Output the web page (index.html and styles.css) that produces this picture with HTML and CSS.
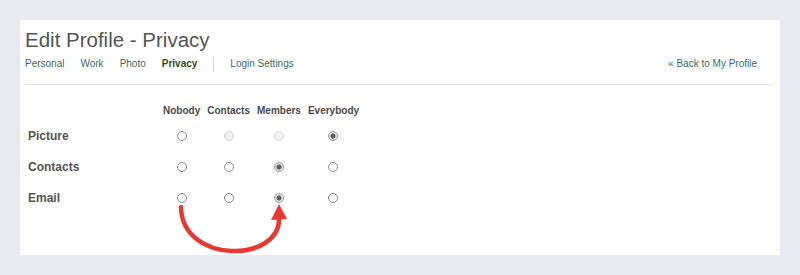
FILE: index.html
```html
<!DOCTYPE html>
<html lang="en">

    <head>
        <meta charset="UTF-8">
        <title>Edit Profile - Privacy</title>
        <link rel="stylesheet" href="styles.css">
    </head>

    <body>
        <div class="panel">
            <h1 class="title">Edit Profile - Privacy</h1>

            <nav class="tabs">
                <a href="#">Personal</a>
                <a href="#">Work</a>
                <a href="#">Photo</a>
                <a href="#" class="active">Privacy</a>
                <span class="sep"></span>
                <a href="#">Login Settings</a>
                <a href="#" class="back">&laquo; Back to My Profile</a>
            </nav>

            <div class="privacy">
                <div></div>
                <div class="head">Nobody</div>
                <div class="head">Contacts</div>
                <div class="head">Members</div>
                <div class="head">Everybody</div>

                <div class="label">Picture</div>
                <div class="cell"><input type="radio" name="picture"></div>
                <div class="cell"><input type="radio" name="picture" disabled></div>
                <div class="cell"><input type="radio" name="picture" disabled></div>
                <div class="cell"><input type="radio" name="picture" checked></div>

                <div class="label">Contacts</div>
                <div class="cell"><input type="radio" name="contacts"></div>
                <div class="cell"><input type="radio" name="contacts"></div>
                <div class="cell"><input type="radio" name="contacts" checked></div>
                <div class="cell"><input type="radio" name="contacts"></div>

                <div class="label">Email</div>
                <div class="cell"><input type="radio" name="email"></div>
                <div class="cell"><input type="radio" name="email"></div>
                <div class="cell"><input type="radio" name="email" checked></div>
                <div class="cell"><input type="radio" name="email"></div>
            </div>

            <svg class="arrow" width="760" height="235" viewBox="0 0 760 235">
                <path d="M161 187 C 162 245, 262 243, 259 197" fill="none" stroke="#e8392e" stroke-width="4.5" stroke-linecap="round" />
                <polygon points="259,184 251,200 267,199" fill="#e8392e" />
            </svg>
        </div>
    </body>

</html>
```

FILE: styles.css
```css
* {
    margin: 0;
    padding: 0;
    box-sizing: border-box;
}

body {
    background-color: #e9eaef;
    padding: 20px;
    font-family: "Liberation Sans", Arial, sans-serif;
}

.panel {
    position: relative;
    width: 760px;
    height: 235px;
    background: #fff;
    padding: 8px 7px 0 5px;
}

.title {
    font-size: 20.5px;
    line-height: 24px;
    font-weight: normal;
    color: #555;
}

.tabs {
    display: flex;
    align-items: center;
    gap: 16px;
    margin-top: 4px;
    padding-bottom: 12px;
    border-bottom: 1px solid #e2e2e2;
    font-size: 10px;
    line-height: 16px;
    height: 16px;
    box-sizing: content-box;
}

.tabs a {
    color: #3b6b5d;
    text-decoration: none;
}

.tabs a.active {
    color: #2e4a1d;
    font-weight: bold;
}

.tabs .sep {
    width: 1px;
    height: 15px;
    background: #dedede;
}

.tabs a.back {
    margin-left: auto;
    margin-right: 16px;
}

.privacy {
    display: grid;
    grid-template-columns: 128px repeat(4, auto);
    grid-template-rows: 20px repeat(3, 31px);
    column-gap: 7px;
    justify-content: start;
    margin: 15px 0 0 3px;
    color: #555;
}

.head {
    font-size: 10px;
    font-weight: bold;
    color: #4a4a4a;
    display: flex;
    align-items: center;
    justify-content: center;
}

.label {
    font-size: 12px;
    font-weight: bold;
    display: flex;
    align-items: center;
}

.cell {
    display: flex;
    align-items: center;
    justify-content: center;
}

.cell input {
    appearance: none;
    -webkit-appearance: none;
    width: 10px;
    height: 10px;
    border: 1px solid #8c8c8c;
    border-radius: 50%;
    background: #fff;
    margin: 0;
}

.cell input:disabled {
    border-color: #d4d4d4;
    background: #f3f3f3;
}

.cell input:checked {
    border-color: #9a9a9a;
    background: radial-gradient(circle, #5f5f5f 0 2.3px, #e4e4e4 2.8px);
}

.arrow {
    position: absolute;
    left: 0;
    top: 0;
    pointer-events: none;
}
```
